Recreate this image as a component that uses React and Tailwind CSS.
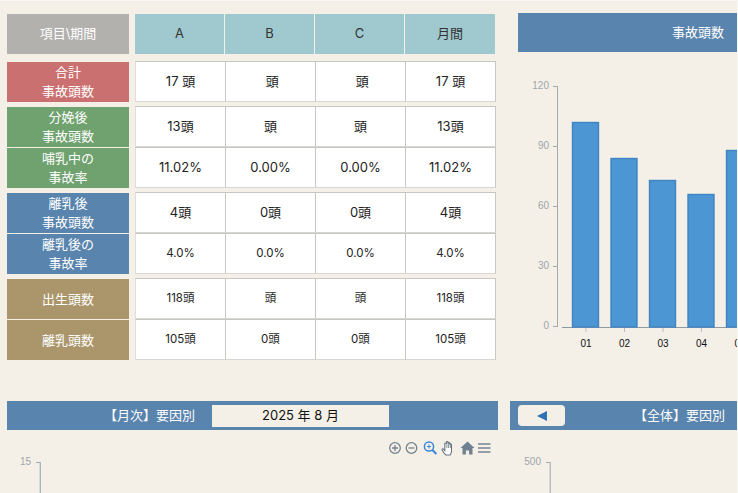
import React from 'react';

const groups = [
  {
    mt: 'mt-2',
    rows: [
      { label: ['合計', '事故頭数'], color: 'bg-[#cb7070]', size: 'text-[13px]', values: ['17 頭', '\u00a0頭', '\u00a0頭', '17 頭'] },
    ],
  },
  {
    mt: 'mt-[5px]',
    rows: [
      { label: ['分娩後', '事故頭数'], color: 'bg-[#70a270]', size: 'text-[13px]', values: ['13頭', '頭', '頭', '13頭'] },
      { label: ['哺乳中の', '事故率'], color: 'bg-[#70a270]', size: 'text-[13px]', values: ['11.02%', '0.00%', '0.00%', '11.02%'] },
    ],
  },
  {
    mt: 'mt-[5px]',
    rows: [
      { label: ['離乳後', '事故頭数'], color: 'bg-[#5884ad]', size: 'text-[13px]', values: ['4頭', '0頭', '0頭', '4頭'] },
      { label: ['離乳後の', '事故率'], color: 'bg-[#5884ad]', size: 'text-[11.5px]', values: ['4.0%', '0.0%', '0.0%', '4.0%'] },
    ],
  },
  {
    mt: 'mt-[5px]',
    rows: [
      { label: ['出生頭数'], color: 'bg-[#ab966b]', size: 'text-[11.5px]', values: ['118頭', '頭', '頭', '118頭'] },
      { label: ['離乳頭数'], color: 'bg-[#ab966b]', size: 'text-[11.5px]', values: ['105頭', '0頭', '0頭', '105頭'] },
    ],
  },
];

const Row = ({ row }) => (
  <div className="flex h-10">
    <div className={`w-[122px] flex flex-col items-center justify-center text-white text-[13px] leading-[19px] ${row.color}`}>
      {row.label.map((line) => (
        <span key={line}>{line}</span>
      ))}
    </div>
    <div className="ml-[6px] flex">
      {row.values.map((v, i) => (
        <div
          key={i}
          className={`${i === 0 ? 'w-[91px] border-l-[#e0deda] border-l' : 'w-[90px]'} h-[41px] -mt-px pt-px flex items-center justify-center bg-white border-t border-r border-b border-[#c9c7c4] border-b-[#d8d6d2] text-[#222] ${row.size}`}
        >
          {v}
        </div>
      ))}
    </div>
  </div>
);

const BarChart = () => {
  const bars = [
    { x: 572.5, top: 122.5, label: '01' },
    { x: 611, top: 158.5, label: '02' },
    { x: 649.5, top: 180.5, label: '03' },
    { x: 688, top: 194.5, label: '04' },
    { x: 726.5, top: 150.5, label: '05' },
  ];
  const ticks = [
    { y: 86, label: '120' },
    { y: 146, label: '90' },
    { y: 206, label: '60' },
    { y: 266, label: '30' },
    { y: 326, label: '0' },
  ];
  return (
    <svg width="220" height="301" viewBox="518 52 220 301" className="block">
      <line x1="557.5" y1="86" x2="557.5" y2="327" stroke="#a3a9ad" />
      <line x1="562" y1="327.5" x2="738" y2="327.5" stroke="#8e9aa3" />
      {ticks.map((t) => (
        <g key={t.label}>
          <line x1="553" y1={t.y + 0.5} x2="558" y2={t.y + 0.5} stroke="#a3a9ad" />
          <text x="549" y={t.y + 3} textAnchor="end" fontSize="10" fill="#a0a5a9" fontFamily="'Liberation Sans', sans-serif">
            {t.label}
          </text>
        </g>
      ))}
      {bars.map((b) => (
        <g key={b.label}>
          <rect x={b.x} y={b.top} width="26" height={327 - b.top} fill="#4c96d4" stroke="#4284c2" strokeWidth="1.4" />
          <line x1={b.x + 13.5} y1="328" x2={b.x + 13.5} y2="332" stroke="#bbbbbb" />
          <text x={b.x + 13.5} y="347" textAnchor="middle" fontSize="10" fill="#111" fontFamily="'Liberation Sans', sans-serif">
            {b.label}
          </text>
        </g>
      ))}
    </svg>
  );
};

const Toolbar = () => (
  <svg width="102" height="16" viewBox="0 0 102 16" className="block">
    <g fill="none" stroke="#75838e" strokeWidth="1.3">
      <circle cx="6" cy="8" r="5.3" />
      <path d="M3 8h6M6 5v6" />
      <circle cx="22.5" cy="8" r="5.3" />
      <path d="M19.5 8h6" />
    </g>
    <g fill="none" stroke="#3a87d8" strokeWidth="1.5">
      <circle cx="40" cy="6.5" r="4.6" />
      <path d="M43.4 10l4 4" strokeWidth="2" />
      <path d="M38 6.5h4M40 4.5v4" strokeWidth="1" />
    </g>
    <path
      d="M57 15c-1.3-1-3.2-3.6-3.9-5-.5-1 .8-1.7 1.5-.8l1.2 1.4V3.8c0-1.1 1.5-1.1 1.6 0V2.4c0-1.2 1.7-1.2 1.7 0v1c0-1.2 1.7-1.2 1.7 0v1.2c.1-1.1 1.7-1 1.7.1V11c0 1.7-.6 3-1.3 4z"
      fill="#ffffff"
      stroke="#66737d"
      strokeWidth="1.1"
    />
    <path d="M57.9 3v5M59.6 2.5V8M61.3 3.5V8" stroke="#66737d" strokeWidth="0.8" fill="none" />
    <path d="M78.5 1.5l-7 6.5h2v6.5h3.4v-4h3.2v4h3.4V8h2z" fill="#6f8090" />
    <path d="M89 4h12.5M89 8h12.5M89 12h12.5" stroke="#75838e" strokeWidth="1.5" />
  </svg>
);

const AxisStub = ({ label, w, color, strokeWidth = 1 }) => (
  <svg width={w} height="39" viewBox={`0 0 ${w} 39`} className="block">
    <text x={w - 10} y="11" textAnchor="end" fontSize="10" fill="#a0a5a9" fontFamily="'Liberation Sans', sans-serif">
      {label}
    </text>
    <line x1={w - 5} y1="8.5" x2={w - 1} y2="8.5" stroke="#a3a9ad" />
    <line x1={w - 0.75} y1="8" x2={w - 0.75} y2="39" stroke={color} strokeWidth={strokeWidth} />
  </svg>
);

export default function App() {
  return (
    <div
      className="w-[738px] h-[493px] overflow-hidden bg-[#f4f0e8] border-t border-r border-[#faf8f4] pt-3 text-[13px]"
      style={{ fontFamily: "Inter, 'Noto Sans CJK JP', sans-serif" }}
    >
      <div className="flex h-[388px]">
        {/* left table */}
        <div className="ml-[7px] w-[489px] shrink-0 pt-px">
          <div className="flex h-10">
            <div className="w-[122px] flex items-center justify-center bg-[#b3b1ae] text-white text-[13px]">項目\期間</div>
            <div className="ml-[6px] flex gap-px">
              {['A', 'B', 'C', '月間'].map((h) => (
                <div key={h} className={`${h === '月間' ? 'w-[90px]' : 'w-[89px]'} flex items-center justify-center bg-[#9fc9ce] text-[#333] text-[13px]`}>
                  {h}
                </div>
              ))}
            </div>
          </div>
          {groups.map((g, i) => (
            <div key={i} className={`${g.mt} flex flex-col gap-px`}>
              {g.rows.map((r) => (
                <Row key={r.label.join('')} row={r} />
              ))}
            </div>
          ))}
        </div>

        {/* right chart */}
        <div className="ml-[22px] w-[220px] shrink-0">
          <div className="h-[39px] bg-[#5884ad] flex items-center justify-end pr-[14px] text-white text-[13px]">事故頭数</div>
          <BarChart />
        </div>
      </div>

      <div className="flex">
        <div className="ml-[7px] w-[491px] shrink-0">
          <div className="h-[29px] bg-[#5884ad] flex items-center">
            <span className="w-[205px] pr-[17px] text-right text-white text-[13px] whitespace-nowrap">【月次】要因別</span>
            <div className="w-[177px] h-[22px] bg-[#f4f0e8] flex items-center justify-center text-[#111] text-[13px]">2025 年 8 月</div>
          </div>
          <div className="flex justify-end pr-[7px] pt-[10px]">
            <Toolbar />
          </div>
          <div className="ml-[9px] -mt-[2px]">
            <AxisStub label="15" w={25} color="#8fa3b3" />
          </div>
        </div>

        <div className="ml-[12px] w-[228px] shrink-0">
          <div className="h-[29px] bg-[#5884ad] flex items-center px-2">
            <button className="w-[47px] h-[21px] bg-[#f4f0e8] rounded-[4px] flex items-center justify-center">
              <svg width="10" height="10" viewBox="0 0 10 10">
                <path d="M10 0v10L0 5z" fill="#2f71b3" />
              </svg>
            </button>
            <span className="ml-[69px] text-white text-[13px] whitespace-nowrap">【全体】要因別</span>
          </div>
          <div className="mt-6">
            <AxisStub label="500" w={41} color="#b9bcbe" strokeWidth={1.5} />
          </div>
        </div>
      </div>
    </div>
  );
}
